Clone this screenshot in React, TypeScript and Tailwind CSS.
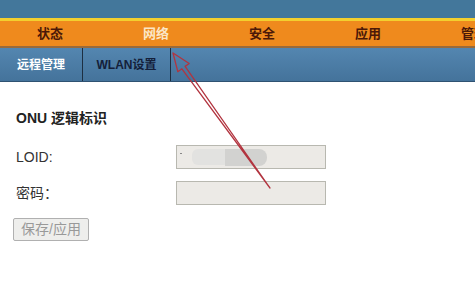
import React from "react"

const navItems = ["状态", "网络", "安全", "应用", "管理"]

export default function App() {
  return (
    <div
      className="relative w-[475px] h-[304px] overflow-hidden bg-white"
      style={{ fontFamily: '"Liberation Sans", "Noto Sans CJK SC", sans-serif' }}
    >
      {/* top banner */}
      <div className="h-[18px] bg-[#43779b]" />
      <div className="h-[3px] bg-[#f3cf2e]" />

      {/* main nav */}
      <div className="flex h-[27px] items-center bg-[#ef8a1d] border-b-2 border-[#9a6a3a] pl-0">
        <div className="-ml-[3px] flex">
          {navItems.map((item, i) => (
            <div
              key={item}
              className={
                "w-[106px] shrink-0 text-center text-[13px] font-bold " +
                (i === 1 ? "text-[#fbe6c6]" : "text-[#4b1808]")
              }
            >
              {item}
            </div>
          ))}
        </div>
      </div>

      {/* sub nav */}
      <div className="flex h-[34px] items-stretch bg-gradient-to-b from-[#5486b0] to-[#44739b] border-b border-[#2f5272]">
        <div className="flex w-[83px] items-center justify-center border-r border-[#1d2f42] text-[12px] font-bold text-white">
          远程管理
        </div>
        <div className="flex w-[88px] items-center justify-center border-r border-[#1d2f42] text-[12px] font-bold text-[#14203a]">
          WLAN设置
        </div>
      </div>

      {/* content */}
      <div className="px-4 pt-[26px]">
        <div className="text-[14px] font-bold text-[#222]">ONU 逻辑标识</div>

        <div className="mt-[16px] flex items-center">
          <div className="w-[160px] text-[14px] text-[#333]">LOID:</div>
          <div className="relative h-[24px] w-[150px] border border-[#b8b8b0] bg-[#eceae6]">
            <div className="absolute left-[15px] top-[3px] h-[16px] w-[38px] rounded-[6px] bg-[#e2e2e0]" />
            <div className="absolute left-[48px] top-[3px] h-[17px] w-[42px] rounded-r-[8px] bg-[#d2d2d0]" />
            <div className="absolute left-[3px] top-[7px] h-[1px] w-[2px] bg-[#888]" />
          </div>
        </div>

        <div className="mt-[12px] flex items-center">
          <div className="w-[160px] text-[14px] text-[#333]">密码：</div>
          <div className="h-[24px] w-[150px] border border-[#b8b8b0] bg-[#eceae6]" />
        </div>

        <button className="-ml-[3px] mt-[13px] h-[23px] w-[76px] border border-[#b0b0b0] bg-[#eeeeec] text-[14px] text-[#999] rounded-[2px]">
          保存/应用
        </button>
      </div>

      {/* annotation arrow */}
      <svg className="pointer-events-none absolute left-0 top-0" width="475" height="304">
        <polygon
          points="173,53 189.2,63.5 185.1,66.4 270,188 181.9,68.8 177.8,71.7"
          fill="none"
          stroke="#b2343f"
          strokeWidth="1.3"
          strokeLinejoin="round"
        />
      </svg>
    </div>
  )
}
